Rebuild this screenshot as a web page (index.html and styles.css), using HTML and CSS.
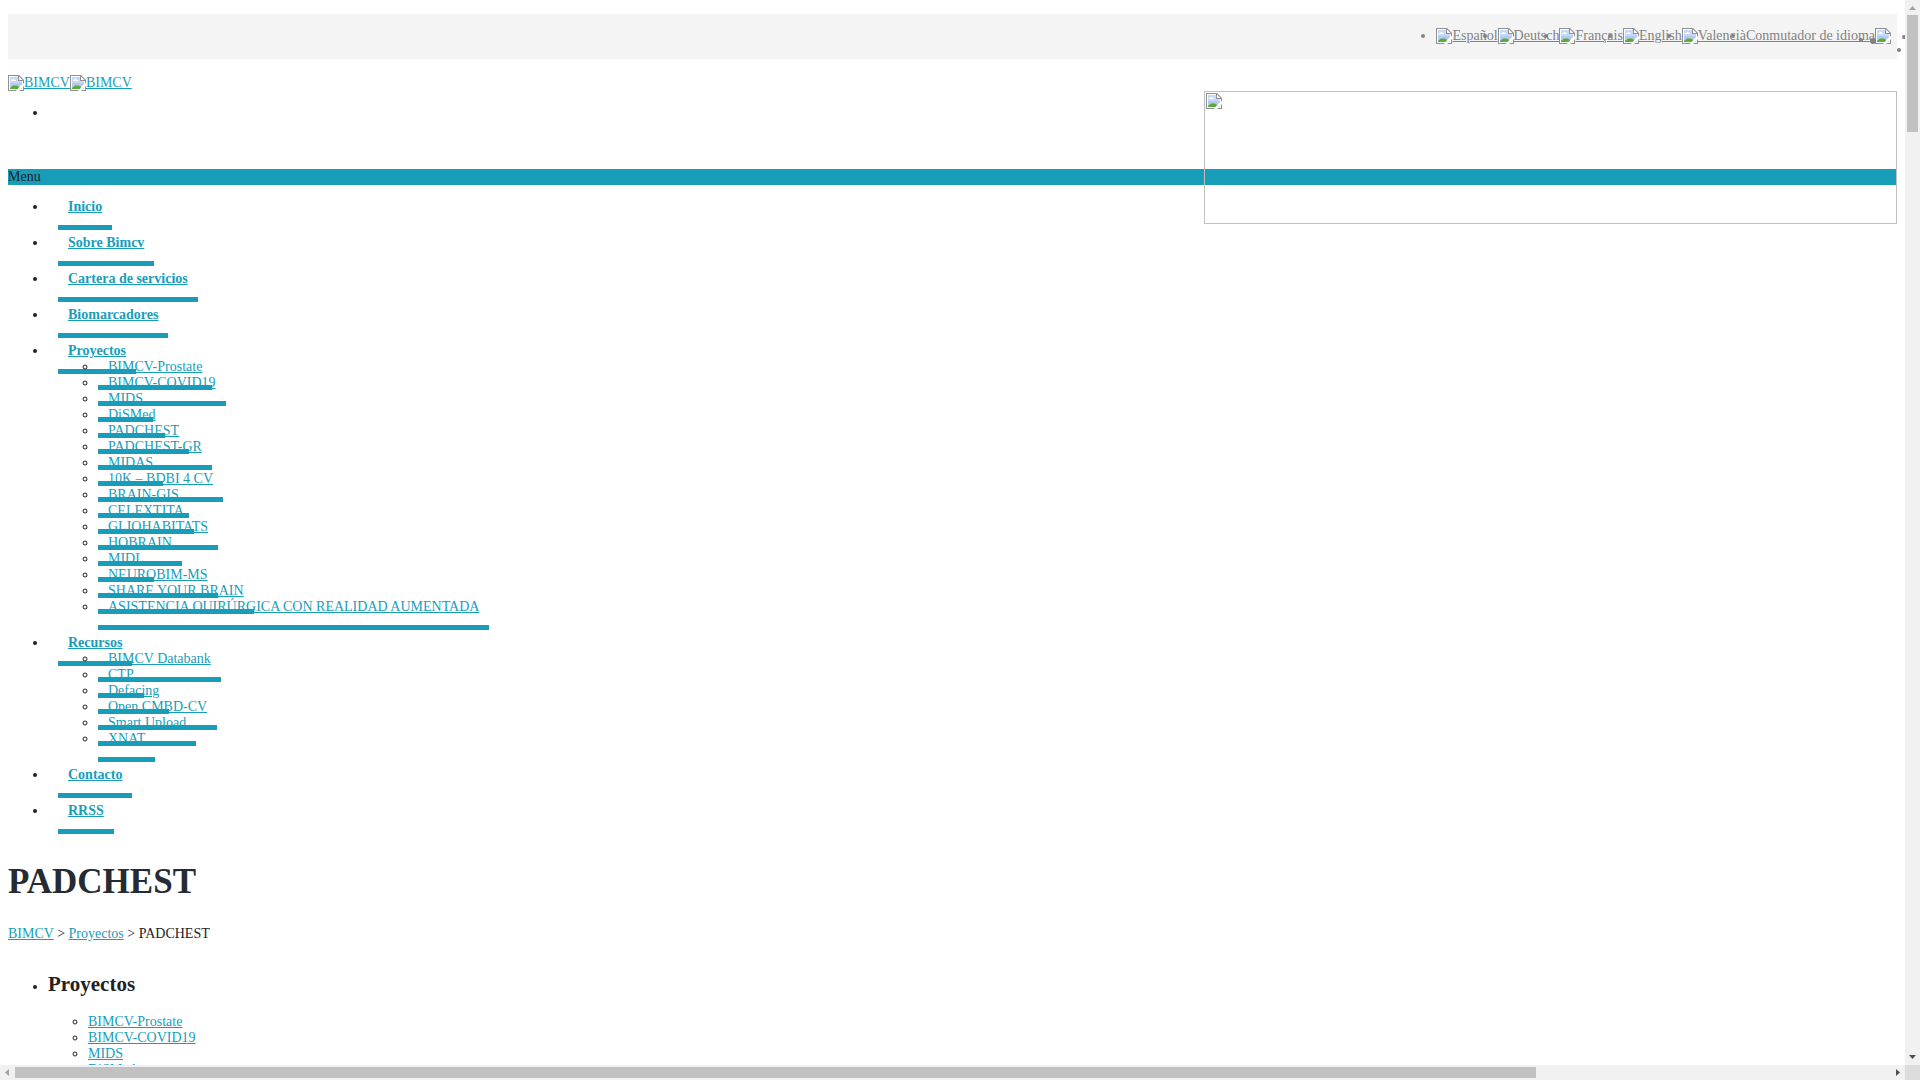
FILE: index.html
```html
<!DOCTYPE html>
<html lang="es">
<head>
  <meta charset="UTF-8">
  <meta name="viewport" content="width=device-width, initial-scale=1.0">
  <title>PADCHEST | BIMCV</title>
  <link rel="stylesheet" href="styles.css">
</head>
<body>
  <svg class="sprite" aria-hidden="true">
    <symbol id="picture" viewBox="0 0 16 16">
      <path d="M0 0H11L16 5V16H0Z" fill="#909090"/>
      <path d="M1 1H10V6H15V15H1Z" fill="#fff"/>
      <path d="M2 2H10V6H14V14H2Z" fill="#c8d8f8"/>
      <path d="M2 8H14V14H2Z" fill="#b5c9f2"/>
      <path d="M11 1.500V5H14.500Z" fill="#fff"/>
      <path d="M3 6V5H4L5 4H6L7 5H8V6Z" fill="#fff"/>
      <path d="M2 14V13L5 10.500H9L14 14Z" fill="#5aac35"/>
      <path d="M8 16L13 10L16 8V11L11 16Z" fill="#fff"/>
    </symbol>
  </svg>

  <div class="window">
    <div class="page">
      <header class="top-bar">
        <ul class="languages">
          <li><a href="#"><svg class="icon"><use href="#picture"/></svg>Español</a></li>
          <li><a href="#"><svg class="icon"><use href="#picture"/></svg>Deutsch</a></li>
          <li><a href="#"><svg class="icon"><use href="#picture"/></svg>Français</a></li>
          <li><a href="#"><svg class="icon"><use href="#picture"/></svg>English</a></li>
          <li><a href="#"><svg class="icon"><use href="#picture"/></svg>Valencià</a></li>
          <li><a href="#">Conmutador de idioma</a></li>
          <li class="current"><a href="#" aria-label="Idioma"><svg class="icon"><use href="#picture"/></svg></a></li>
        </ul>
        <span class="dot dot-inner"></span>
        <span class="dot dot-big"></span>
        <span class="dot dot-edge"></span>
        <span class="dot dot-low"></span>
      </header>

      <div class="logo">
        <a href="#"><svg class="icon"><use href="#picture"/></svg>BIMCV<svg class="icon"><use href="#picture"/></svg>BIMCV</a>
      </div>

      <div class="banner"><svg class="icon"><use href="#picture"/></svg></div>

      <ul class="social">
        <li></li>
      </ul>

      <div class="menu-title">Menu</div>
      <nav>
        <ul class="menu">
          <li><a href="#">Inicio</a></li>
          <li><a href="#">Sobre Bimcv</a></li>
          <li><a href="#">Cartera de servicios</a></li>
          <li><a href="#">Biomarcadores</a></li>
          <li><a href="#">Proyectos</a>
            <ul>
              <li><a href="#">BIMCV-Prostate</a></li>
              <li><a href="#">BIMCV-COVID19</a></li>
              <li><a href="#">MIDS</a></li>
              <li><a href="#">DiSMed</a></li>
              <li><a href="#">PADCHEST</a></li>
              <li><a href="#">PADCHEST-GR</a></li>
              <li><a href="#">MIDAS</a></li>
              <li><a href="#">10K – BDBI 4 CV</a></li>
              <li><a href="#">BRAIN-GIS</a></li>
              <li><a href="#">CELEXTITA</a></li>
              <li><a href="#">GLIOHABITATS</a></li>
              <li><a href="#">HOBRAIN</a></li>
              <li><a href="#">MIDL</a></li>
              <li><a href="#">NEUROBIM-MS</a></li>
              <li><a href="#">SHARE YOUR BRAIN</a></li>
              <li><a href="#">ASISTENCIA QUIRÚRGICA CON REALIDAD AUMENTADA</a></li>
            </ul>
          </li>
          <li><a href="#">Recursos</a>
            <ul>
              <li><a href="#">BIMCV Databank</a></li>
              <li><a href="#">CTP</a></li>
              <li><a href="#">Defacing</a></li>
              <li><a href="#">Open CMBD-CV</a></li>
              <li><a href="#">Smart Upload</a></li>
              <li><a href="#">XNAT</a></li>
            </ul>
          </li>
          <li><a href="#">Contacto</a></li>
          <li><a href="#">RRSS</a></li>
        </ul>
      </nav>

      <h1>PADCHEST</h1>
      <div class="breadcrumb"><a href="#">BIMCV</a> &gt; <a href="#">Proyectos</a> &gt; PADCHEST</div>

      <ul class="sidebar">
        <li>
          <h3>Proyectos</h3>
          <ul>
            <li><a href="#">BIMCV-Prostate</a></li>
            <li><a href="#">BIMCV-COVID19</a></li>
            <li><a href="#">MIDS</a></li>
            <li><a href="#">DiSMed</a></li>
          </ul>
        </li>
      </ul>
    </div>

    <div class="scroll scroll-y" aria-hidden="true">
      <svg class="arrow off" viewBox="0 0 15 15"><path d="M4 10L7.500 6L11 10Z"/></svg>
      <div class="track"><div class="thumb"></div></div>
      <svg class="arrow" viewBox="0 0 15 15"><path d="M4 5L7.500 9L11 5Z"/></svg>
    </div>
    <div class="scroll scroll-x" aria-hidden="true">
      <svg class="arrow off" viewBox="0 0 15 15"><path d="M9 4L5 7.500L9 11Z"/></svg>
      <div class="track"><div class="thumb"></div></div>
      <svg class="arrow" viewBox="0 0 15 15"><path d="M6 4L10 7.500L6 11Z"/></svg>
    </div>
    <div class="corner"></div>
  </div>
</body>
</html>
```

FILE: styles.css
```css
:root {
  --primary: #189db9;
  --text: #222;
  --muted: #828282;
}

body {
  margin: 0;
  font-family: "Liberation Serif", "Times New Roman", serif;
  font-size: 14px;
  line-height: 16px;
  color: var(--text);
  background: #fff;
}

a {
  color: var(--primary);
}

ul {
  margin: 14px 0;
  padding-left: 40px;
}

ul ul {
  margin: 0;
}

.sprite {
  display: none;
}

.icon {
  width: 16px;
  height: 16px;
  vertical-align: top;
}

/* window with its scrollbars */
.window {
  display: grid;
  grid-template: minmax(0, 1fr) 15px / minmax(0, 1fr) 15px;
  height: 100vh;
}

.page {
  overflow: hidden;
  padding: 14px 8px 0;
}

/* language bar */
.top-bar {
  position: relative;
  padding: 14px 6px 15px;
  margin-bottom: 16px;
  background: #f4f4f4;
  color: var(--muted);
}

.top-bar a {
  color: var(--muted);
}

.languages {
  display: flex;
  justify-content: flex-end;
  margin: 0;
}

.languages li {
  height: 16px;
}

.languages .current {
  list-style: none;
}

.dot {
  position: absolute;
  width: 4px;
  height: 4px;
  border-radius: 50%;
  background: var(--muted);
}

.dot-inner {
  right: 34px;
  top: 24px;
}

.dot-big {
  right: 21px;
  top: 24px;
  width: 6px;
  height: 6px;
}

.dot-edge {
  right: -9px;
  top: 21px;
}

.dot-low {
  right: -4px;
  top: 34px;
}

.logo {
  height: 16px;
}

.banner {
  float: right;
  box-sizing: border-box;
  width: 693px;
  height: 133px;
  padding: 1px;
  border: 1px solid silver;
}

.social {
  margin: 14px 0 48px;
}

.social li {
  height: 16px;
}

/* main menu */
.menu-title {
  background: var(--primary);
}

.menu {
  margin-bottom: 22px;
}

.menu > li {
  padding: 0 0 20px 10px;
}

.menu a {
  padding: 10px 10px 11px;
  border-bottom: 5px solid var(--primary);
}

.menu > li > a {
  font-weight: bold;
}

h1 {
  margin: 22px 0 24px;
  font-size: 35px;
  line-height: 41px;
  color: #252b33;
}

.sidebar {
  margin-top: 30px;
}

.sidebar h3 {
  margin: 0 0 18px;
  font-size: 21px;
  line-height: 24px;
}

/* scrollbars */
.scroll {
  display: flex;
  background: #f1f1f1;
}

.scroll-y {
  flex-direction: column;
}

.scroll-x {
  grid-row: 2;
}

.track {
  flex: 1;
}

.thumb {
  background: #c1c1c1;
}

.scroll-y .thumb {
  width: 11px;
  height: 11.3%;
  margin: 0 2px;
}

.scroll-x .thumb {
  width: 81.1%;
  height: 11px;
  margin: 2px 0;
}

.arrow {
  width: 15px;
  height: 15px;
  fill: #505050;
}

.arrow.off {
  fill: #a3a3a3;
}

.corner {
  background: #dcdcdc;
}
```
